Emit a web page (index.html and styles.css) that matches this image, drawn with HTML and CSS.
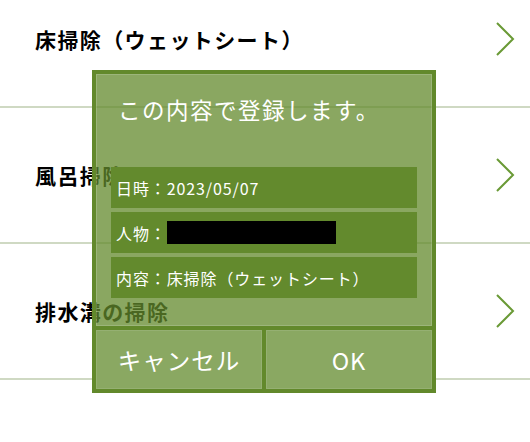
FILE: index.html
```html
<!DOCTYPE html>
<html lang="ja">
<head>
<meta charset="utf-8">
<link rel="stylesheet" href="styles.css">
</head>
<body>
<ul class="list">
  <li class="item"><span class="item-label">床掃除（ウェットシート）</span>
    <svg class="chev" width="20" height="34" viewBox="0 0 20 34"><polyline points="2,1 18,17 2,33" fill="none" stroke="#6a9a36" stroke-width="2"/></svg>
  </li>
  <li class="item"><span class="item-label">風呂掃除</span>
    <svg class="chev" width="20" height="34" viewBox="0 0 20 34"><polyline points="2,1 18,17 2,33" fill="none" stroke="#6a9a36" stroke-width="2"/></svg>
  </li>
  <li class="item"><span class="item-label">排水溝の掃除</span>
    <svg class="chev" width="20" height="34" viewBox="0 0 20 34"><polyline points="2,1 18,17 2,33" fill="none" stroke="#6a9a36" stroke-width="2"/></svg>
  </li>
</ul>

<div class="dialog">
  <div class="dialog-body">
    <p class="dialog-title">この内容で登録します。</p>
    <div class="rows">
      <div class="row">日時：2023/05/07</div>
      <div class="row">人物：<span class="redact"></span></div>
      <div class="row">内容：床掃除（ウェットシート）</div>
    </div>
  </div>
  <div class="actions">
    <div class="btn">キャンセル</div>
    <div class="btn">OK</div>
  </div>
</div>
</body>
</html>
```

FILE: styles.css
```css
html, body {
  margin: 0;
  padding: 0;
  background: #ffffff;
  width: 530px;
  height: 442px;
  overflow: hidden;
  font-family: "Noto Sans CJK JP", "Noto Sans", sans-serif;
}

.list {
  list-style: none;
  margin: -28px 0 0 0;
  padding: 0;
}

.item {
  height: 134px;
  border-bottom: 2px solid #cfd9c3;
  display: flex;
  align-items: center;
  justify-content: space-between;
  padding: 0 15px 0 35px;
}

.item-label {
  font-size: 21px;
  font-weight: bold;
  color: #000000;
  letter-spacing: 1.4px;
}

.chev {
  display: block;
}

.dialog {
  position: absolute;
  left: 92px;
  top: 70px;
  width: 336px;
  border: 4px solid #62892b;
  display: flex;
  flex-direction: column;
}

.dialog-body {
  height: 250px;
  background: rgba(99, 138, 44, 0.75);
  border: 1px solid rgba(255, 255, 255, 0.16);
  padding: 0 14px;
  display: flex;
  flex-direction: column;
}

.dialog-title {
  margin: 18px 0 0 7px;
  font-size: 22.5px;
  line-height: 32px;
  letter-spacing: 1.5px;
  color: #ffffff;
  font-weight: normal;
}

.rows {
  margin-top: 42px;
  display: flex;
  flex-direction: column;
  gap: 4px;
}

.row {
  height: 41px;
  background: #638a2d;
  color: #ffffff;
  font-size: 16px;
  letter-spacing: 0.9px;
  display: flex;
  align-items: center;
  padding-left: 5px;
}

.redact {
  display: inline-block;
  width: 169px;
  height: 23px;
  background: #000000;
}

.actions {
  display: grid;
  grid-template-columns: 1fr 1fr;
  gap: 4px;
  border-top: 4px solid #62892b;
  background: #62892b;
}

.btn {
  height: 59px;
  background: #8aa862;
  color: #ffffff;
  font-size: 23.5px;
  letter-spacing: 1px;
  display: flex;
  align-items: center;
  justify-content: center;
  box-sizing: border-box;
  border: 1px solid rgba(255, 255, 255, 0.1);
}
```
